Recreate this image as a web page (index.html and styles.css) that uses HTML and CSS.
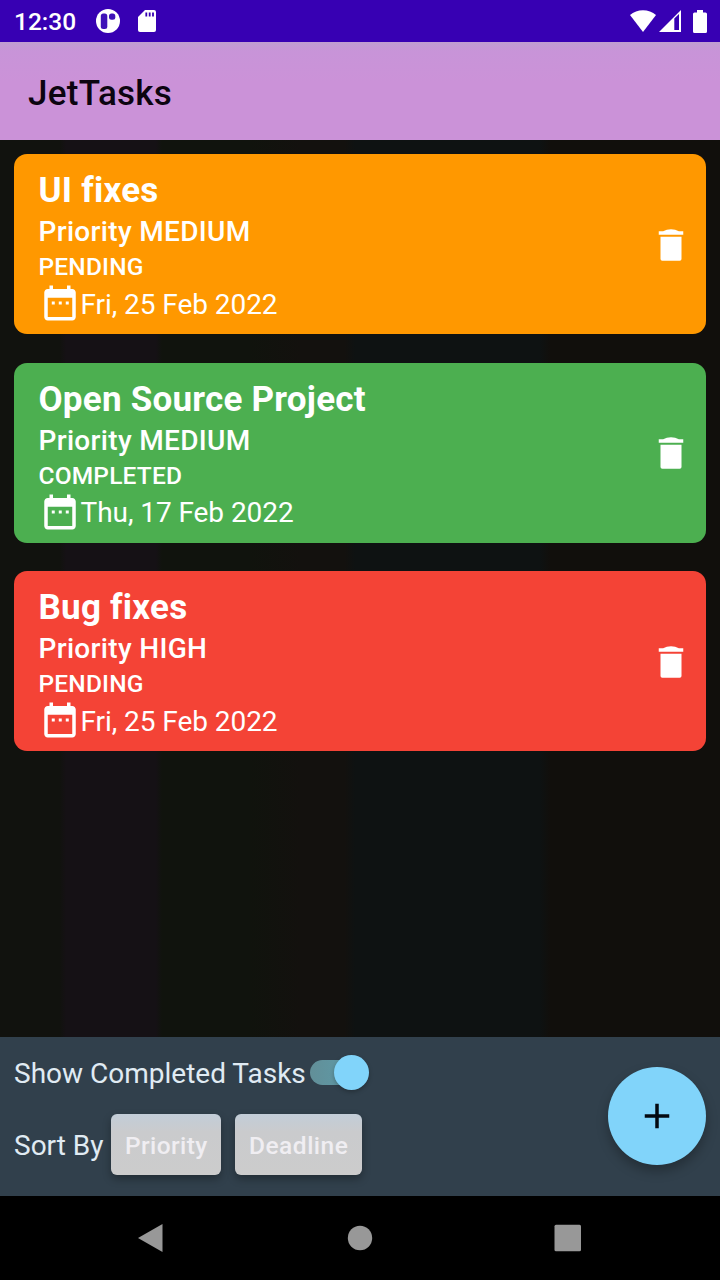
FILE: index.html
```html
<!DOCTYPE html>
<html lang="en">
<head>
<meta charset="utf-8">
<title>JetTasks</title>
<link rel="stylesheet" href="styles.css">
</head>
<body>
<svg class="symbols" aria-hidden="true">
  <symbol id="calendar" viewBox="0 0 24 24"><path d="M9 11.200H7.300v1.600H9zm4 0h-1.700v1.600H13zm4 0h-1.700v1.600H17zm2-7.200h-1V2h-2v2H8V2H6v2H5c-1.110 0-1.990.9-1.990 2L3 20c0 1.100.89 2 2 2h14c1.100 0 2-.9 2-2V6c0-1.100-.9-2-2-2zm0 16H5V9h14v11z"/></symbol>
  <symbol id="trash" viewBox="0 0 24 24"><path d="M6 20q0 1 1 1h10q1 0 1-1V7.300H6zM19 4.200h-2.500q-2-1.200-4.500-1.200t-4.500 1.200H5V6.100h14z"/></symbol>
</svg>
<div class="screen">
  <header class="status">
    <span class="time">12:30</span>
    <svg class="status-app" viewBox="0 0 24 24"><circle cx="12" cy="12" r="12" fill="#fff"/><rect x="4.800" y="4.500" width="6.500" height="15.500" rx="2.500" fill="#3f12b8"/><rect x="13" y="4.500" width="6.300" height="6.300" rx="2.500" fill="#3f12b8"/></svg>
    <svg class="status-sd" viewBox="0 0 18 22"><path fill="#fff" d="M7 0h9a2 2 0 0 1 2 2v18a2 2 0 0 1-2 2H2a2 2 0 0 1-2-2V7z"/><path stroke="#3700b3" stroke-width="1.800" d="M8.300 2.500v4M11.700 2.500v4M15 2.500v4"/></svg>
    <span class="spacer"></span>
    <svg class="status-wifi" viewBox="0 0 26 22"><path fill="#fff" d="M0 5C7-1.500 19-1.500 26 5L13 22z"/></svg>
    <svg class="status-cell" viewBox="0 0 22 22"><path fill="#fff" fill-rule="evenodd" d="M0 22L22 0v22zM15.300 8.500v11.500h4.700V4z"/></svg>
    <svg class="status-battery" viewBox="0 0 14 23"><path fill="#fff" d="M4 0h6v2.500h2.500A1.500 1.500 0 0 1 14 4v17.500a1.500 1.500 0 0 1-1.500 1.500h-11A1.500 1.500 0 0 1 0 21.500V4a1.500 1.500 0 0 1 1.500-1.500H4z"/></svg>
  </header>
  <div class="app-bar"><h1 class="app-title">JetTasks</h1></div>
  <main class="tasks">
    <article class="card card-orange">
      <div class="card-info">
        <h2 class="card-title">UI fixes</h2>
        <div class="card-priority">Priority MEDIUM</div>
        <div class="card-state">PENDING</div>
        <div class="card-date"><svg class="icon"><use href="#calendar"/></svg><span class="date-text">Fri, 25 Feb 2022</span></div>
      </div>
      <svg class="icon"><use href="#trash"/></svg>
    </article>
    <article class="card card-green">
      <div class="card-info">
        <h2 class="card-title">Open Source Project</h2>
        <div class="card-priority">Priority MEDIUM</div>
        <div class="card-state">COMPLETED</div>
        <div class="card-date"><svg class="icon"><use href="#calendar"/></svg><span class="date-text">Thu, 17 Feb 2022</span></div>
      </div>
      <svg class="icon"><use href="#trash"/></svg>
    </article>
    <article class="card card-red">
      <div class="card-info">
        <h2 class="card-title">Bug fixes</h2>
        <div class="card-priority">Priority HIGH</div>
        <div class="card-state">PENDING</div>
        <div class="card-date"><svg class="icon"><use href="#calendar"/></svg><span class="date-text">Fri, 25 Feb 2022</span></div>
      </div>
      <svg class="icon"><use href="#trash"/></svg>
    </article>
  </main>
  <footer class="controls">
    <div class="options">
      <div class="option-row option-show"><span>Show Completed Tasks</span><span class="switch"><span class="thumb"></span></span></div>
      <div class="option-row option-sort"><span class="sort-label">Sort By</span><button class="sort">Priority</button><button class="sort sort-deadline">Deadline</button></div>
    </div>
    <button class="fab" aria-label="Add task"><svg viewBox="0 0 24 24" class="icon"><path d="M19 13h-6v6h-2v-6H5v-2h6V5h2v6h6v2z"/></svg></button>
  </footer>
  <nav class="nav">
    <svg class="nav-icon" viewBox="0 0 42 42"><path d="M7 21L31.500 7v28z"/></svg>
    <svg class="nav-icon" viewBox="0 0 42 42"><circle cx="21" cy="21" r="12.200"/></svg>
    <svg class="nav-icon" viewBox="0 0 42 42"><rect x="7.500" y="7.700" width="26.500" height="26.500" rx="1.500"/></svg>
  </nav>
</div>
</body>
</html>
```
FILE: styles.css
```css
* { box-sizing: border-box; }
body { margin: 0; background: #000; font-family: Roboto, sans-serif; }
.symbols { display: none; }
.screen { width: 720px; height: 1280px; display: flex; flex-direction: column; overflow: hidden; }
.icon { width: 42px; height: 42px; fill: currentColor; flex: none; display: block; }

.status { height: 42px; flex: none; display: flex; align-items: center; padding: 0 13px 0 14px; background: #3700b3; color: #fff; }
.time { font-size: 24.500px; font-weight: 500; width: 82px; line-height: 42px; padding-top: 1px; }
.status-app { width: 24px; height: 24px; }
.status-sd { width: 18px; height: 22px; margin-left: 17.500px; }
.spacer { flex: 1; }
.status-wifi { width: 26px; height: 22px; }
.status-cell { width: 22px; height: 22px; margin: 0 12px 0 3px; }
.status-battery { width: 14px; height: 23px; }

.app-bar { height: 98px; flex: none; display: flex; align-items: center; padding: 4px 28px 0; background: linear-gradient(#bf9fd0, #c894d8 9px, #cb92d8 40px); }
.app-title { margin: 0; font-size: 35px; font-weight: 500; letter-spacing: .26px; color: #0c0410; }

.tasks { flex: 1; display: flex; flex-direction: column; gap: 28.500px; padding: 14px; background: linear-gradient(90deg, #11120e 0 60px, #151115 66px 156px, #10130d 162px 250px, #13110e 300px 345px, #0e1212 355px 540px, #110f0c 550px); }
.card { height: 180px; flex: none; display: flex; align-items: center; justify-content: space-between; padding: 1px 14px 0 24.500px; border-radius: 13px; color: #fff; }
.card-orange { background: #ff9800; }
.card-green { background: #4caf50; }
.card-red { background: #f44336; }
.card-info { align-self: flex-start; padding-top: 15px; }
.card-title { margin: 0; font-size: 35px; line-height: 41px; font-weight: 700; letter-spacing: .23px; }
.card-priority { font-size: 28px; line-height: 42px; font-weight: 500; letter-spacing: .32px; }
.card-state { font-size: 24.500px; line-height: 28px; font-weight: 500; letter-spacing: .18px; }
.card-date { display: flex; align-items: center; height: 42px; margin-top: 1px; font-size: 28px; line-height: 42px; letter-spacing: -.06px; }
.date-text { padding-top: 3px; }

.controls { height: 159px; flex: none; display: flex; justify-content: space-between; align-items: center; padding: 0 14px 2px; background: #31404c; color: #e0ebf3; font-size: 28px; }
.options { display: flex; flex-direction: column; align-self: stretch; }
.option-row { display: flex; align-items: center; }
.option-show { height: 73px; }
.option-sort { height: 69px; }
.switch { width: 56px; height: 25px; margin: -3px 0 0 4px; border-radius: 13px; background: linear-gradient(90deg, #628f98, #5d9ead); display: flex; align-items: center; justify-content: flex-end; }
.thumb { width: 35px; height: 35px; margin-right: -3px; flex: none; border-radius: 50%; background: #81d4fa; box-shadow: 0 2px 4px rgba(0, 0, 0, .25); }
.sort-label { width: 97px; padding-top: 2px; }
.sort { width: 110px; height: 61px; margin: -1px 14px 0 0; padding: 2px 0 0 14px; border: 0; border-radius: 6px; background: linear-gradient(#c2cdd8, #cacbcd 18px, #ccc); color: #f0eef2; font: 500 24.500px Roboto, sans-serif; letter-spacing: .4px; text-align: left; box-shadow: 0 4px 8px rgba(0, 0, 0, .3); }
.sort-deadline { width: 127px; letter-spacing: .5px; }
.fab { width: 98px; height: 98px; padding: 0; border: 0; border-radius: 50%; background: #81d4fa; color: #030910; display: grid; place-items: center; box-shadow: 0 6px 12px rgba(0, 0, 0, .28); }

.nav { height: 84px; flex: none; display: flex; justify-content: space-between; align-items: center; padding: 0 131px; background: #000; }
.nav-icon { width: 42px; height: 42px; fill: #989898; }
```
